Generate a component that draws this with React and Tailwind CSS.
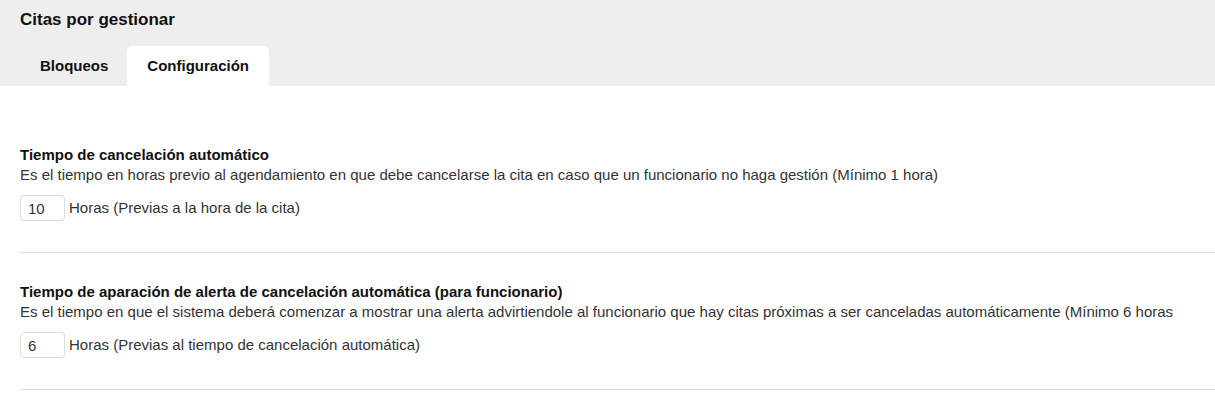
export default function App() {
  const sections = [
    {
      title: 'Tiempo de cancelación automático',
      desc: 'Es el tiempo en horas previo al agendamiento en que debe cancelarse la cita en caso que un funcionario no haga gestión (Mínimo 1 hora)',
      value: '10',
      unit: 'Horas (Previas a la hora de la cita)',
    },
    {
      title: 'Tiempo de aparación de alerta de cancelación automática (para funcionario)',
      desc: 'Es el tiempo en que el sistema deberá comenzar a mostrar una alerta advirtiendole al funcionario que hay citas próximas a ser canceladas automáticamente (Mínimo 6 horas',
      value: '6',
      unit: 'Horas (Previas al tiempo de cancelación automática)',
    },
  ];

  return (
    <div className="min-h-[404px] bg-white font-['Liberation_Sans',Arial,sans-serif] text-[#333]">
      <div className="bg-[#eeeeee] px-5 pt-[10px]">
        <h1 className="text-[17px] leading-5 font-bold text-[#111]">Citas por gestionar</h1>
        <div className="mt-4 flex h-10">
          <button type="button" className="pl-5 pr-[19px] text-[15px] font-bold text-[#111]">
            Bloqueos
          </button>
          <button type="button" className="px-5 text-[15px] font-bold text-[#111] bg-white rounded-t-[5px]">
            Configuración
          </button>
        </div>
      </div>

      <div className="pl-5 pt-[30px]">
        {sections.map(s => (
          <div key={s.title} className="pt-[29px] pb-[31px] border-b border-[#dedede]">
            <div className="text-[15px] leading-5 font-bold text-[#111]">{s.title}</div>
            <div className="text-[15px] leading-5 whitespace-nowrap">{s.desc}</div>
            <div className="mt-[10px] flex items-center gap-[4px]">
              <input
                type="text"
                defaultValue={s.value}
                className="w-[45px] h-[26px] pl-[7px] pr-2 border border-[#dcdcdc] rounded-[4px] text-[15px] text-[#333] outline-none"
              />
              <span className="text-[15px] leading-5">{s.unit}</span>
            </div>
          </div>
        ))}
      </div>
    </div>
  );
}
